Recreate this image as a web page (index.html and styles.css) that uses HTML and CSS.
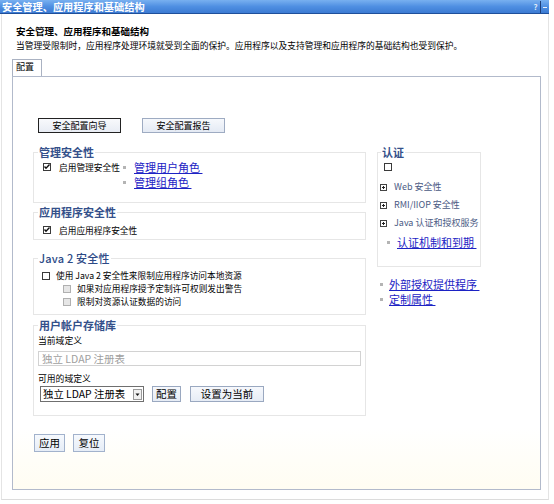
FILE: index.html
```html
<!DOCTYPE html>
<html lang="zh-CN">
<head>
<meta charset="utf-8">
<title>安全管理、应用程序和基础结构</title>
<link rel="stylesheet" href="styles.css">
</head>
<body>
<div class="portlet">
  <div class="titlebar">
    <span class="title">安全管理、应用程序和基础结构</span>
    <span class="tb-icons"><span class="tb-help">?</span><span class="tb-sep"></span><span class="tb-min"></span></span>
  </div>
  <div class="frame">
    <div class="h1">安全管理、应用程序和基础结构</div>
    <div class="desc">当管理受限制时，应用程序处理环境就受到全面的保护。应用程序以及支持管理和应用程序的基础结构也受到保护。</div>
    <div class="tabs"><span class="tab">配置</span></div>
    <div class="panel">
      <div class="toprow">
        <button class="btn btn-focus">安全配置向导</button>
        <button class="btn">安全配置报告</button>
      </div>
      <div class="cols">
        <div class="left">
          <fieldset class="fs fs-admin">
            <legend>管理安全性</legend>
            <div class="admin-row">
              <div class="chk-line">
                <span class="cb"><svg viewBox="0 0 8 8" width="8" height="8"><path d="M1.5 3.5 L3 5.2 L6.5 1.5" fill="none" stroke="#111" stroke-width="1.4"/></svg></span>
                <span class="lbl">启用管理安全性</span>
              </div>
              <ul class="links">
                <li><a href="#">管理用户角色&nbsp;</a></li>
                <li><a href="#">管理组角色&nbsp;</a></li>
              </ul>
            </div>
          </fieldset>
          <fieldset class="fs fs-app">
            <legend>应用程序安全性</legend>
            <div class="chk-line">
              <span class="cb"><svg viewBox="0 0 8 8" width="8" height="8"><path d="M1.5 3.5 L3 5.2 L6.5 1.5" fill="none" stroke="#111" stroke-width="1.4"/></svg></span>
              <span class="lbl">启用应用程序安全性</span>
            </div>
          </fieldset>
          <fieldset class="fs fs-java">
            <legend class="legend-light">Java 2 安全性</legend>
            <div class="java-row">
              <span class="cb"></span>
              <span class="lbl">使用 Java 2 安全性来限制应用程序访问本地资源</span>
            </div>
            <div class="java-row sub">
              <span class="cb cb-dis"></span>
              <span class="lbl">如果对应用程序授予定制许可权则发出警告</span>
            </div>
            <div class="java-row sub">
              <span class="cb cb-dis"></span>
              <span class="lbl">限制对资源认证数据的访问</span>
            </div>
          </fieldset>
          <fieldset class="fs fs-repo">
            <legend>用户帐户存储库</legend>
            <div class="field-lbl">当前域定义</div>
            <div class="ro-input">独立 LDAP 注册表</div>
            <div class="field-lbl second">可用的域定义</div>
            <div class="repo-row">
              <span class="select"><span class="sel-text">独立 LDAP 注册表</span><span class="sel-arrow"><svg viewBox="0 0 7 7" width="7" height="7"><path d="M1.5 2.5 L5.5 2.5 L3.5 5 Z" fill="#111"/></svg></span></span>
              <button class="btn2 btn-cfg">配置</button>
              <button class="btn2 btn-cur">设置为当前</button>
            </div>
          </fieldset>
        </div>
        <div class="right">
          <fieldset class="fs fs-auth">
            <legend>认证</legend>
            <div class="auth-cb"><span class="cb"></span></div>
            <div class="tree-row first"><span class="plus"></span><span class="tree-txt">Web 安全性</span></div>
            <div class="tree-row"><span class="plus"></span><span class="tree-txt">RMI/IIOP 安全性</span></div>
            <div class="tree-row"><span class="plus"></span><span class="tree-txt">Java 认证和授权服务</span></div>
            <ul class="links auth-links">
              <li><a href="#">认证机制和到期&nbsp;</a></li>
            </ul>
          </fieldset>
          <ul class="links ext-links">
            <li><a href="#">外部授权提供程序&nbsp;</a></li>
            <li><a href="#">定制属性&nbsp;</a></li>
          </ul>
        </div>
      </div>
      <div class="actions">
        <button class="btn3">应用</button>
        <button class="btn3">复位</button>
      </div>
    </div>
  </div>
</div>
</body>
</html>
```

FILE: styles.css
```css
* { box-sizing: border-box; }
html, body { margin: 0; padding: 0; background: #ffffff; }
body {
  font-family: "Noto Sans CJK SC", "Liberation Sans", sans-serif;
  color: #000;
  width: 554px;
  height: 504px;
  overflow: hidden;
}
.portlet { width: 550px; }
.titlebar {
  height: 14px;
  display: flex;
  align-items: center;
  justify-content: space-between;
  background: linear-gradient(to bottom, #78b0f0 0%, #4f8fe2 50%, #3c7bd3 100%);
  border-bottom: 1px solid #1f4f9a;
  color: #fff;
  width: 549px;
}
.title {
  font-size: 10.2px;
  font-weight: bold;
  line-height: 13px;
  padding-left: 2px;
}
.tb-icons { display: flex; align-items: center; height: 12px; }
.tb-help {
  font-size: 8px;
  line-height: 10px;
  color: #dfe9f7;
  width: 7px;
  text-align: center;
  font-weight: bold;
}
.tb-sep { width: 1px; height: 12px; background: #1e3e78; margin: 0 1px; }
.tb-min {
  width: 6px;
  height: 10px;
  position: relative;
  margin-right: 1px;
}
.tb-min::after {
  content: "";
  position: absolute;
  left: 1px; top: 5px;
  width: 4px; height: 1px;
  background: #e8f0fb;
}
.frame {
  height: 486px;
  border-left: 1px solid #e4e4e4;
  border-right: 1px solid #e4e4e4;
  border-bottom: 1px solid #dcdcdc;
  margin-left: 1px;
  padding: 11px 9px 0 10px;
  width: 548px;
}
.h1 {
  font-size: 9.5px;
  font-weight: bold;
  line-height: 12px;
  padding-left: 4px;
}
.desc {
  margin-top: 3px;
  font-size: 8.75px;
  line-height: 11px;
  padding-left: 4px;
  white-space: nowrap;
}
.tabs { margin-top: 8px; height: 17px; display: flex; }
.tab {
  display: block;
  width: 30px;
  height: 17px;
  border: 1px solid #aab2c2;
  border-bottom: none;
  background: #fff;
  font-size: 9px;
  line-height: 14px;
  padding-left: 3px;
  position: relative;
  z-index: 1;
  margin-bottom: -1px;
}
.panel {
  width: 529px;
  height: 414px;
  border: 1px solid #b2bacb;
  background: linear-gradient(to bottom, #ffffff 0%, #ffffff 85%, #fffdf2 100%);
  padding: 41px 0 0 20px;
}
.toprow { display: flex; gap: 21px; margin-left: 5px; height: 15px; }
.btn {
  height: 15px;
  width: 83px;
  padding: 0;
  font-family: inherit;
  font-size: 9px;
  line-height: 13px;
  background: linear-gradient(to bottom, #f6f8fc, #e4eaf4);
  border: 1px solid #9eabc2;
  color: #000;
}
.btn-focus { border: 1px solid #222; background: linear-gradient(to bottom, #f8f9fc, #e8ecf4); }
.cols { display: flex; gap: 11px; margin-top: 13px; align-items: flex-start; }
.left { width: 333px; }
.right { width: 104px; }
.fs {
  margin: 0;
  border: 1px solid #e6e6e6;
  padding: 0 4px 0 4px;
  min-width: 0;
}
.fs legend {
  padding: 0 1px;
  font-size: 11px;
  line-height: 13px;
  font-weight: bold;
  color: #34508a;
}
.fs legend.legend-light { font-weight: 500; color: #2c4a86; font-size: 11px; letter-spacing: 0.2px; }
.fs-admin { padding-bottom: 12px; }
.admin-row { display: flex; padding-top: 1px; }
.chk-line { display: flex; align-items: center; height: 14px; }
.fs-admin .chk-line { width: 85px; padding-left: 5px; }
.cb {
  display: inline-block;
  width: 8px;
  height: 8px;
  border: 1px solid #3a3a3a;
  background: #fff;
  position: relative;
  flex: none;
}
.cb svg { position: absolute; left: -1px; top: -1px; }
.cb-dis { border-color: #b0b0b0; background: #e6e6e6; }
.lbl { font-size: 8.7px; line-height: 13px; white-space: nowrap; }
.chk-line .lbl { margin-left: 8px; }
.links { list-style: none; margin: 0; padding: 0; }
.links li {
  display: flex;
  align-items: center;
  height: 15px;
  font-size: 11px;
}
.links li::before {
  content: "";
  width: 3px; height: 3px;
  background: #b4b4b4;
  margin-right: 8px;
  flex: none;
}
.links a {
  color: #1c22c4;
  text-decoration: underline;
  line-height: 13px;
  white-space: nowrap;
}
.fs-app { margin-top: 3px; padding-top: 4px; padding-bottom: 2px; }
.fs-app .chk-line { padding-left: 5px; }
.fs-java { margin-top: 12px; padding-top: 4px; padding-bottom: 6px; }
.java-row { display: flex; align-items: center; height: 13px; padding-left: 4px; }
.java-row .lbl { margin-left: 6px; }
.java-row.sub { padding-left: 25px; }
.java-row.sub .lbl { margin-left: 6px; }
.fs-repo { margin-top: 4px; padding-top: 3px; padding-bottom: 13px; }
.field-lbl { font-size: 8.8px; line-height: 12px; }
.field-lbl.second { margin-top: 7px; }
.ro-input {
  margin-top: 4px;
  width: 323px;
  height: 15px;
  border: 1px solid #d2d2d2;
  color: #a0a0a0;
  font-size: 10.5px;
  line-height: 13px;
  padding-left: 3px;
  white-space: nowrap;
}
.repo-row { display: flex; align-items: center; margin-top: 1px; padding-left: 2px; height: 16px; }
.select {
  display: flex;
  align-items: center;
  width: 104px;
  height: 16px;
  border: 1px solid #6f6f6f;
  background: #fff;
  padding: 0 1px 0 2px;
}
.sel-text { font-size: 10.4px; line-height: 14px; flex: 1; white-space: nowrap; }
.sel-arrow {
  width: 9px;
  height: 11px;
  border: 1px solid #9a9a9a;
  background: #f0f0f0;
  display: flex;
  align-items: center;
  justify-content: center;
}
.btn2 {
  height: 16px;
  padding: 0;
  font-family: inherit;
  font-size: 10.5px;
  line-height: 14px;
  background: linear-gradient(to bottom, #f6f8fc, #e6ecf5);
  border: 1px solid #9aa8c0;
  color: #000;
}
.btn-cfg { width: 29px; margin-left: 8px; }
.btn-cur { width: 74px; margin-left: 9px; }
.fs-auth { padding: 1px 2px 0 2px; height: 121px; }
.fs-auth legend { margin-left: 1px; }
.auth-cb { height: 14px; display: flex; align-items: center; padding-left: 4px; }
.tree-row { display: flex; align-items: center; height: 18px; }
.tree-row.first { margin-top: 4px; }
.plus {
  width: 7px; height: 7px;
  border: 1px solid #444;
  position: relative;
  flex: none;
  background: #fff;
}
.plus::before {
  content: ""; position: absolute; left: 1px; top: 2px; width: 3px; height: 1px; background: #222;
}
.plus::after {
  content: ""; position: absolute; left: 2px; top: 1px; width: 1px; height: 3px; background: #222;
}
.tree-txt {
  margin-left: 7px;
  font-size: 9px;
  line-height: 12px;
  color: #4a5a84;
  white-space: nowrap;
}
.auth-links { margin-top: 3px; padding-left: 7px; }
.auth-links li::before { margin-right: 7px; }
.ext-links { margin-top: 10px; padding-left: 3px; }
.ext-links li { height: 15px; }
.ext-links li::before { margin-right: 6px; }
.actions { display: flex; gap: 8px; margin-top: 18px; margin-left: 1px; }
.btn3 {
  height: 18px;
  width: 31px;
  padding: 0;
  font-family: inherit;
  font-size: 10.5px;
  line-height: 16px;
  background: linear-gradient(to bottom, #f6f9fd, #e6edf7);
  border: 1px solid #a2b2cc;
  color: #000;
}
.btn3 + .btn3 { width: 32px; }
```
